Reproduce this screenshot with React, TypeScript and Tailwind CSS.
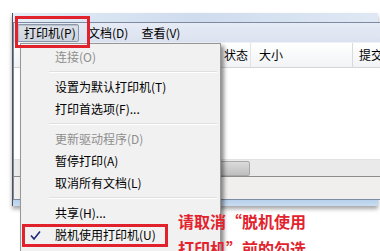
import React from "react";

function Sep() {
  return (
    <div className="h-[8px] flex items-center ml-[28px] mr-[3px]">
      <div className="w-full h-[2px] border-t border-[#e0e0e0] border-b border-b-white" />
    </div>
  );
}

function Item({ label, disabled, checked }: { label: string; disabled?: boolean; checked?: boolean }) {
  return (
    <div className="h-[22px] flex items-center">
      <div className="w-[34px] h-full flex items-center pl-[9px]">
        {checked ? (
          <svg width="11" height="11" viewBox="0 0 11 11">
            <path d="M1 5.5 L4 9 L10 1.5" fill="none" stroke="#1e2a7a" strokeWidth="1.6" />
          </svg>
        ) : null}
      </div>
      <span className={disabled ? "text-[#8e8e8e]" : "text-black"}>{label}</span>
    </div>
  );
}

export default function App() {
  return (
    <div className="relative w-[380px] h-[251px] overflow-hidden bg-white font-['Noto_Sans_CJK_SC','Microsoft_YaHei',sans-serif] text-[12px] leading-none text-black">
      {/* window */}
      <div className="absolute left-[12px] top-[13px] w-[366px] h-[193px] flex flex-col border-l border-[#4a5260] shadow-[0_3px_4px_rgba(0,0,0,0.35)]">
        {/* title bar remnant */}
        <div className="h-[9px] bg-gradient-to-r from-[#e3ecf7] via-[#cfdcee] to-[#dfe8f4]" />
        <div className="flex-1 flex bg-[#dce7f4]">
          <div className="w-[4px] bg-[#eef3fa]" />
          <div className="flex-1 flex flex-col border border-[#7d8ba0] bg-white">
            {/* menubar */}
            <div className="h-[20px] flex items-center pl-[3px] bg-gradient-to-b from-[#e6ebf5] to-[#dbe2ef] border-b border-[#eef1f7]">
              <div className="w-[62px] h-[18px] flex items-center pl-[6px] rounded-[2px] border border-[#8a97ab] bg-gradient-to-b from-[#dde2ea] to-[#cdd4df] shadow-[inset_1px_1px_1px_rgba(0,0,0,0.15)]">
                打印机(P)
              </div>
              <div className="ml-[9px]">文档(D)</div>
              <div className="ml-[13px]">查看(V)</div>
            </div>
            {/* header */}
            <div className="h-[25px] flex bg-gradient-to-b from-white to-[#f2f3f5] border-b border-[#d5d5d5] overflow-hidden">
              <div className="w-[203px] shrink-0" />
              <div className="w-[33px] shrink-0 flex items-center pl-[6px] border-l border-[#e3e3e3]">状态</div>
              <div className="w-[102px] shrink-0 flex items-center pl-[8px] border-l border-[#e3e3e3]">大小</div>
              <div className="w-[40px] shrink-0 flex items-center pl-[6px] border-l border-[#dadada] whitespace-nowrap">提交时间</div>
            </div>
            {/* list */}
            <div className="flex-1 bg-white" />
            {/* scrollbar */}
            <div className="h-[17px] flex items-center bg-[#eaeaea] border-t border-[#e2e2e2]">
              <div className="w-[203px] shrink-0 h-full" />
              <div className="w-[33px] h-[15px] rounded-[2px] bg-gradient-to-b from-[#dadada] to-[#bfbfbf] border border-[#a9a9a9]" />
              <div className="flex-1" />
              <div className="w-[15px] h-full flex items-center justify-center">
                <svg width="5" height="8" viewBox="0 0 5 8">
                  <path d="M0 0 L5 4 L0 8 Z" fill="#3a3a3a" />
                </svg>
              </div>
            </div>
            {/* status bar */}
            <div className="h-[23px] flex justify-end items-end bg-[#f1eeee] border-t border-[#8c8c8c] pr-[2px] pb-[2px]">
              <svg width="10" height="10" viewBox="0 0 10 10">
                <rect x="7" y="1" width="2" height="2" fill="#b6b6b6" />
                <rect x="4" y="4" width="2" height="2" fill="#b6b6b6" />
                <rect x="7" y="4" width="2" height="2" fill="#b6b6b6" />
                <rect x="1" y="7" width="2" height="2" fill="#b6b6b6" />
                <rect x="4" y="7" width="2" height="2" fill="#b6b6b6" />
                <rect x="7" y="7" width="2" height="2" fill="#b6b6b6" />
              </svg>
            </div>
          </div>
          <div className="w-[2px] bg-[#eef3fa]" />
        </div>
        <div className="h-[6px] bg-gradient-to-b from-[#b7d0ec] to-[#c9dcf1]" />
      </div>

      {/* dropdown menu */}
      <div className="absolute left-[20px] top-[43px] w-[201px] h-[215px] bg-[#f1f1f1] border border-[#979797] pt-[2px] shadow-[3px_3px_4px_rgba(0,0,0,0.45)]">
        <Item label="连接(O)" disabled />
        <Sep />
        <Item label="设置为默认打印机(T)" />
        <Item label="打印首选项(F)..." />
        <Sep />
        <Item label="更新驱动程序(D)" disabled />
        <Item label="暂停打印(A)" />
        <Item label="取消所有文档(L)" />
        <Sep />
        <Item label="共享(H)..." />
        <Item label="脱机使用打印机(U)" checked />
      </div>

      {/* red highlight boxes */}
      <div className="absolute left-[15px] top-[16px] w-[75px] h-[32px] border-[3px] border-[#e1222d]" />
      <div className="absolute left-[22px] top-[224px] w-[146px] h-[23px] border-[3px] border-[#e1222d]" />

      {/* annotation */}
      <div className="absolute left-[178px] top-[208px] text-[16px] leading-[27px] font-bold text-[#e2232e] whitespace-nowrap">
        <div>请取消“脱机使用</div>
        <div>打印机”前的勾选</div>
      </div>
    </div>
  );
}
